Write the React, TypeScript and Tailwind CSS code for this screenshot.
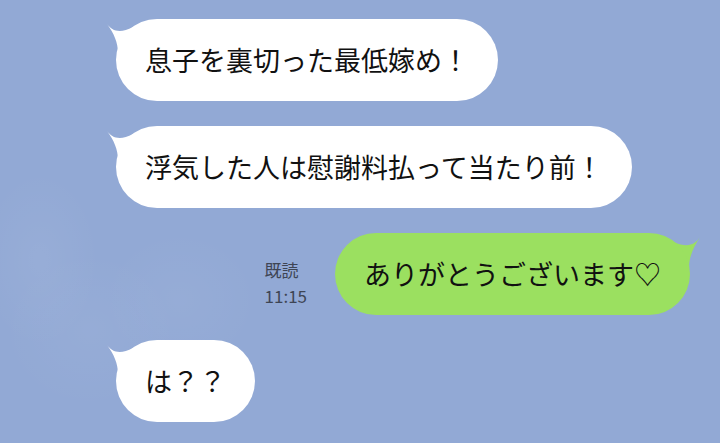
const jp = "font-['Noto_Sans_CJK_JP','Noto_Sans',sans-serif]"

const LeftTail = () => (
  <svg className="absolute left-[-10px] top-[0px]" width="34" height="34" viewBox="0 0 34 34">
    <path d="M1 5 C 6 12, 14 15, 27 8 L 27 34 L 12 34 C 12 24, 8 14, 1 5 Z" fill="#ffffff" />
  </svg>
)

const RightTail = () => (
  <svg className="absolute right-[-11px] top-[0px]" width="34" height="34" viewBox="0 0 34 34">
    <path d="M33 4 C 28 12, 20 15, 7 9 L 7 34 L 22 34 C 22 24, 27 13, 33 4 Z" fill="#9be060" />
  </svg>
)

const Incoming = ({ text }: { text: string }) => (
  <div className="flex">
    <div className="relative">
      <LeftTail />
      <div className="relative flex h-[82px] items-center rounded-full bg-white px-[29px] text-[27px] text-[#111] whitespace-nowrap">
        {text}
      </div>
    </div>
  </div>
)

const App = () => {
  return (
    <div
      className={`relative h-[443px] w-[720px] overflow-hidden bg-[#92a9d5] ${jp} bg-[radial-gradient(ellipse_60px_90px_at_40px_260px,rgba(255,255,255,0.05),transparent),radial-gradient(ellipse_80px_70px_at_180px_300px,rgba(255,255,255,0.04),transparent),radial-gradient(ellipse_90px_80px_at_90px_330px,rgba(255,255,255,0.04),transparent)]`}
    >
      <div className="flex flex-col gap-[25px] pl-[116px] pr-[30px] pt-[19px]">
        <Incoming text="息子を裏切った最低嫁め！" />
        <Incoming text="浮気した人は慰謝料払って当たり前！" />

        <div className="flex items-end justify-end gap-[28px]">
          <div className="flex flex-col pb-[6px] text-[17px] leading-[26px] text-[#3e4554]">
            <span>既読</span>
            <span>11:15</span>
          </div>
          <div className="relative">
            <RightTail />
            <div className="relative flex h-[82px] items-center rounded-full bg-[#9be060] px-[29px] text-[27px] text-[#111] whitespace-nowrap">
              ありがとうございます♡
            </div>
          </div>
        </div>

        <Incoming text="は？？" />
      </div>
    </div>
  )
}

export default App
